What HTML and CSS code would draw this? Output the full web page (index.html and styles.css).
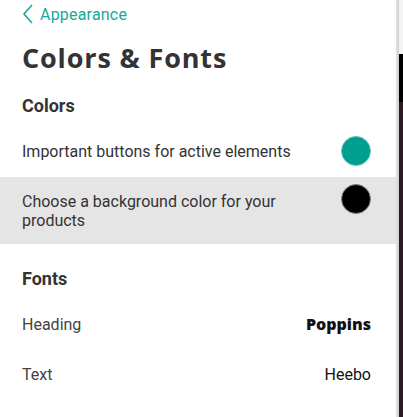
FILE: index.html
```html
<!DOCTYPE html>
<html>
<head>
<meta charset="utf-8">
<link rel="stylesheet" href="styles.css">
</head>
<body>
<div class="layout">
  <div class="panel">
    <a class="back" href="#">
      <svg class="chev" width="12" height="20" viewBox="0 0 12 20"><path d="M10 1 L2 10 L10 19" fill="none" stroke="#17a899" stroke-width="1.6"/></svg>
      <span>Appearance</span>
    </a>
    <h1 class="title">Colors &amp; Fonts</h1>
    <h2 class="section">Colors</h2>
    <div class="row">
      <span class="label">Important buttons for active elements</span>
      <span class="swatch teal"></span>
    </div>
    <div class="row row-active">
      <span class="label">Choose a background color for your products</span>
      <span class="swatch black"></span>
    </div>
    <h2 class="section fonts-head">Fonts</h2>
    <div class="frow first">
      <span class="flabel">Heading</span>
      <span class="fval poppins">Poppins</span>
    </div>
    <div class="frow">
      <span class="flabel">Text</span>
      <span class="fval heebo">Heebo</span>
    </div>
  </div>
  <div class="edge"></div>
  <div class="side">
    <div class="side-top"></div>
    <div class="side-black"></div>
    <div class="side-dark"></div>
  </div>
</div>
</body>
</html>
```
FILE: styles.css
```css
html, body { margin: 0; padding: 0; }
body { font-family: Roboto, "Liberation Sans", sans-serif; background: #fff; color: #333; }
.layout { display: flex; height: 417px; width: 403px; overflow: hidden; }
.panel { width: 396px; flex: none; box-sizing: border-box; padding: 0 25px 0 22px; background: #fff; }
.edge { width: 3px; flex: none; background: linear-gradient(to right, #e4e4e4, #cfcfcf); }
.side { flex: 1; display: flex; flex-direction: column; }
.side-top { height: 54px; background: #f4f4f4; }
.side-black { height: 48px; background: #000; }
.side-dark { flex: 1; background: #2b1a21; }

.back { display: flex; align-items: center; height: 28px; gap: 6px; color: #17a899; text-decoration: none; font-size: 16px; letter-spacing: 0.2px; }
.chev { display: block; }
.title { margin: 10px 0 0; height: 40px; line-height: 40px; font-family: "Open Sans", sans-serif; font-weight: 700; font-size: 27px; color: #333; letter-spacing: 0.85px; }
.section { margin: 13px 0 0; font-size: 18px; font-weight: 700; color: #333; height: 30px; line-height: 30px; }
.row { display: flex; justify-content: space-between; align-items: center; height: 56px; padding: 4px 25px 0 22px; margin: 0 -25px 0 -22px; box-sizing: border-box; }
.label { font-size: 16px; line-height: 19px; color: #333; max-width: 290px; }
.swatch { width: 30px; height: 30px; border-radius: 50%; flex: none; box-sizing: border-box; }
.teal { background: #009e8f; border: 1px solid #6cc5bb; }
.black { background: #000; border: 1px solid #888; }
.row-active { background: #e5e5e5; height: 67px; align-items: flex-start; padding-top: 7px; }
.row-active .label { padding-top: 8px; }
.fonts-head { margin-top: 20px; }
.frow { display: flex; justify-content: space-between; align-items: center; height: 50px; }
.frow.first { margin-top: 5px; }
.flabel { font-size: 16px; color: #444; }
.fval { font-size: 16px; color: #111; }
.poppins { font-family: "Open Sans", sans-serif; font-weight: 800; }
.heebo { font-family: Roboto, sans-serif; }
```
